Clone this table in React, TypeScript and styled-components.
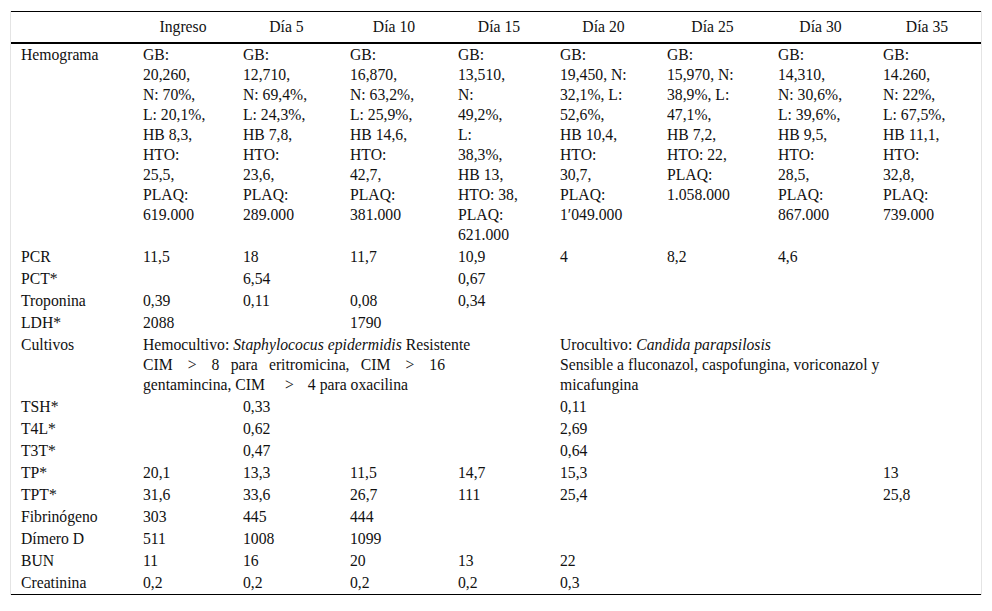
import React from "react";
import styled, { createGlobalStyle } from "styled-components";

const GlobalStyle = createGlobalStyle`
  html, body {
    margin: 0;
    padding: 0;
    background: #ffffff;
  }
  body {
    font-family: "Liberation Serif", "Times New Roman", serif;
    color: #111;
  }
`;

const Page = styled.div`
  width: 992px;
  padding: 11px 10px 0 10px;
  box-sizing: border-box;
`;

const Frame = styled.div`
  border-left: 1px solid #e4e4e4;
  border-right: 1px solid #e4e4e4;
`;

const Table = styled.table`
  width: 100%;
  border-collapse: collapse;
  table-layout: fixed;
  font-family: "Liberation Serif", "Times New Roman", serif;
  font-size: 15.7px;
  line-height: 20px;
  color: #111;
  border-top: 1px solid #000;
  border-bottom: 1px solid #000;
`;

const HeadRow = styled.tr`
  border-bottom: 2px solid #000;
`;

const HeadCell = styled.th`
  font-weight: normal;
  text-align: center;
  padding: 5px 10px 5px;
  vertical-align: top;
`;

const Cell = styled.td<{ $pr?: number }>`
  text-align: left;
  vertical-align: top;
  padding: 1px ${(p) => p.$pr ?? 10}px 1px 10px;
`;

// paragraph inside the culture cells
const Para = styled.div<{ $w?: number; $justify?: boolean }>`
  max-width: ${(p) => (p.$w ? `${p.$w}px` : "none")};
  text-align: ${(p) => (p.$justify ? "justify" : "left")};
`;

const Gap = styled.span<{ $w: number }>`
  display: inline-block;
  width: ${(p) => p.$w}px;
`;

// column widths and the inner padding-right that makes the Hemograma text wrap
const widths = [122, 100, 107, 108, 102, 107, 111, 105, 108];
const padRight = [10, 25.5, 31.6, 32.6, 30.7, 28.5, 32.5, 29.6, 33.5];

const days = ["Ingreso", "Día 5", "Día 10", "Día 15", "Día 20", "Día 25", "Día 30", "Día 35"];

const hemograma = [
  "GB: 20,260, N: 70%, L: 20,1%, HB 8,3, HTO: 25,5, PLAQ: 619.000",
  "GB: 12,710, N: 69,4%, L: 24,3%, HB 7,8, HTO: 23,6, PLAQ: 289.000",
  "GB: 16,870, N: 63,2%, L: 25,9%, HB 14,6, HTO: 42,7, PLAQ: 381.000",
  "GB: 13,510, N: 49,2%, L: 38,3%, HB 13, HTO: 38, PLAQ: 621.000",
  "GB: 19,450, N: 32,1%, L: 52,6%, HB 10,4, HTO: 30,7, PLAQ: 1′049.000",
  "GB: 15,970, N: 38,9%, L: 47,1%, HB 7,2, HTO: 22, PLAQ: 1.058.000",
  "GB: 14,310, N: 30,6%, L: 39,6%, HB 9,5, HTO: 28,5, PLAQ: 867.000",
  "GB: 14.260, N: 22%, L: 67,5%, HB 11,1, HTO: 32,8, PLAQ: 739.000",
];

type Row = { label: string; values: string[] };

const before: Row[] = [
  { label: "PCR", values: ["11,5", "18", "11,7", "10,9", "4", "8,2", "4,6", ""] },
  { label: "PCT*", values: ["", "6,54", "", "0,67", "", "", "", ""] },
  { label: "Troponina", values: ["0,39", "0,11", "0,08", "0,34", "", "", "", ""] },
  { label: "LDH*", values: ["2088", "", "1790", "", "", "", "", ""] },
];

const after: Row[] = [
  { label: "TSH*", values: ["", "0,33", "", "", "0,11", "", "", ""] },
  { label: "T4L*", values: ["", "0,62", "", "", "2,69", "", "", ""] },
  { label: "T3T*", values: ["", "0,47", "", "", "0,64", "", "", ""] },
  { label: "TP*", values: ["20,1", "13,3", "11,5", "14,7", "15,3", "", "", "13"] },
  { label: "TPT*", values: ["31,6", "33,6", "26,7", "111", "25,4", "", "", "25,8"] },
  { label: "Fibrinógeno", values: ["303", "445", "444", "", "", "", "", ""] },
  { label: "Dímero D", values: ["511", "1008", "1099", "", "", "", "", ""] },
  { label: "BUN", values: ["11", "16", "20", "13", "22", "", "", ""] },
  { label: "Creatinina", values: ["0,2", "0,2", "0,2", "0,2", "0,3", "", "", ""] },
];

const DataRow: React.FC<{ row: Row }> = ({ row }) => (
  <tr>
    <Cell>{row.label}</Cell>
    {row.values.map((v, i) => (
      <Cell key={i} $pr={padRight[i + 1]}>
        {v}
      </Cell>
    ))}
  </tr>
);

const Cim: React.FC<{ a: number; b: number }> = ({ a, b }) => (
  <>
    CIM<Gap $w={a} />&gt;<Gap $w={b} />
  </>
);

const App: React.FC = () => {
  return (
    <Page>
      <GlobalStyle />
      <Frame>
        <Table>
          <colgroup>
            {widths.map((w, i) => (
              <col key={i} style={{ width: w }} />
            ))}
          </colgroup>
          <thead>
            <HeadRow>
              <HeadCell />
              {days.map((d) => (
                <HeadCell key={d}>{d}</HeadCell>
              ))}
            </HeadRow>
          </thead>
          <tbody>
            <tr>
              <Cell>Hemograma</Cell>
              {hemograma.map((h, i) => (
                <Cell key={i} $pr={padRight[i + 1]}>
                  {h}
                </Cell>
              ))}
            </tr>
            {before.map((r) => (
              <DataRow key={r.label} row={r} />
            ))}
            <tr>
              <Cell>Cultivos</Cell>
              <Cell colSpan={4} $pr={10}>
                <Para>
                  Hemocultivo: <i>Staphylococus epidermidis</i> Resistente
                </Para>
                <Para $w={302} $justify>
                  <Cim a={15} b={15} />8 para eritromicina, <Cim a={15} b={15} />
                  16 gentamincina, <Cim a={20} b={14} />4 para oxacilina
                </Para>
              </Cell>
              <Cell colSpan={4} $pr={10}>
                <Para>
                  Urocultivo: <i>Candida parapsilosis</i>
                </Para>
                <Para $w={340}>
                  Sensible a fluconazol, caspofungina, voriconazol y micafungina
                </Para>
              </Cell>
            </tr>
            {after.map((r) => (
              <DataRow key={r.label} row={r} />
            ))}
          </tbody>
        </Table>
      </Frame>
    </Page>
  );
};

export default App;
